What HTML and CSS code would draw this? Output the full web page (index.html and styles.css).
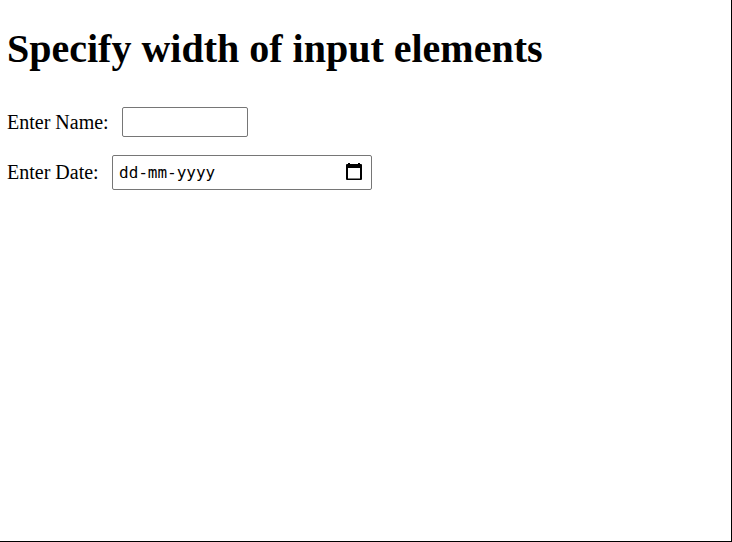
FILE: index.html
```html
<!DOCTYPE html>
<html lang="en">
<head>
<meta charset="utf-8">
<title>Specify width of input elements</title>
<link rel="stylesheet" href="styles.css">
</head>
<body>
<main class="page">
  <h1 class="title">Specify width of input elements</h1>
  <div class="row row-name">
    <label class="label label-name" for="name">Enter Name:</label>
    <input class="field field-name" id="name" type="text">
  </div>
  <div class="row row-date">
    <span class="label label-date">Enter Date:</span>
    <div class="field field-date">
      <span class="date-text"><span>dd</span><span class="dash">-</span><span>mm</span><span class="dash">-</span><span>yyyy</span></span>
      <svg class="calendar" width="16" height="18" viewBox="0 0 16 18"><path fill="#000" fill-rule="evenodd" d="M2 0h2v1h8V0h2v1h1a1 1 0 0 1 1 1v14a1 1 0 0 1-1 1H1a1 1 0 0 1-1-1V2a1 1 0 0 1 1-1h1zM2 5v10.500h12V5z"/></svg>
    </div>
  </div>
</main>
</body>
</html>
```
FILE: styles.css
```css
* { box-sizing: border-box; }
body { margin: 0; background: #fff; color: #000; font-family: "Liberation Serif", serif; }
.page { width: 732px; height: 542px; border-right: 1px solid #000; border-bottom: 1px solid #000; padding: 26px 0 0 7px; }
.title { margin: 0; font-size: 40px; line-height: 46px; white-space: nowrap; }
.row { display: flex; align-items: center; font-size: 20px; }
.row-name { margin-top: 35px; height: 30px; }
.row-date { margin-top: 18px; height: 35px; }
.label { white-space: nowrap; }
.label-name { width: 115px; }
.label-date { width: 105px; }
.field { border: 1px solid #767676; border-radius: 2px; background: #fff; }
.field-name { width: 126px; height: 30px; padding: 1px 2px; font-size: 17px; }
.field-date { width: 260px; height: 35px; display: flex; align-items: center; justify-content: space-between; padding: 0 9px 0 6px; }
.date-text { display: flex; font: 16px/20px "DejaVu Sans Mono", monospace; }
.dash { width: 9.600px; text-align: center; font-family: "Liberation Serif", serif; }
.calendar { margin-bottom: 2px; }
```
